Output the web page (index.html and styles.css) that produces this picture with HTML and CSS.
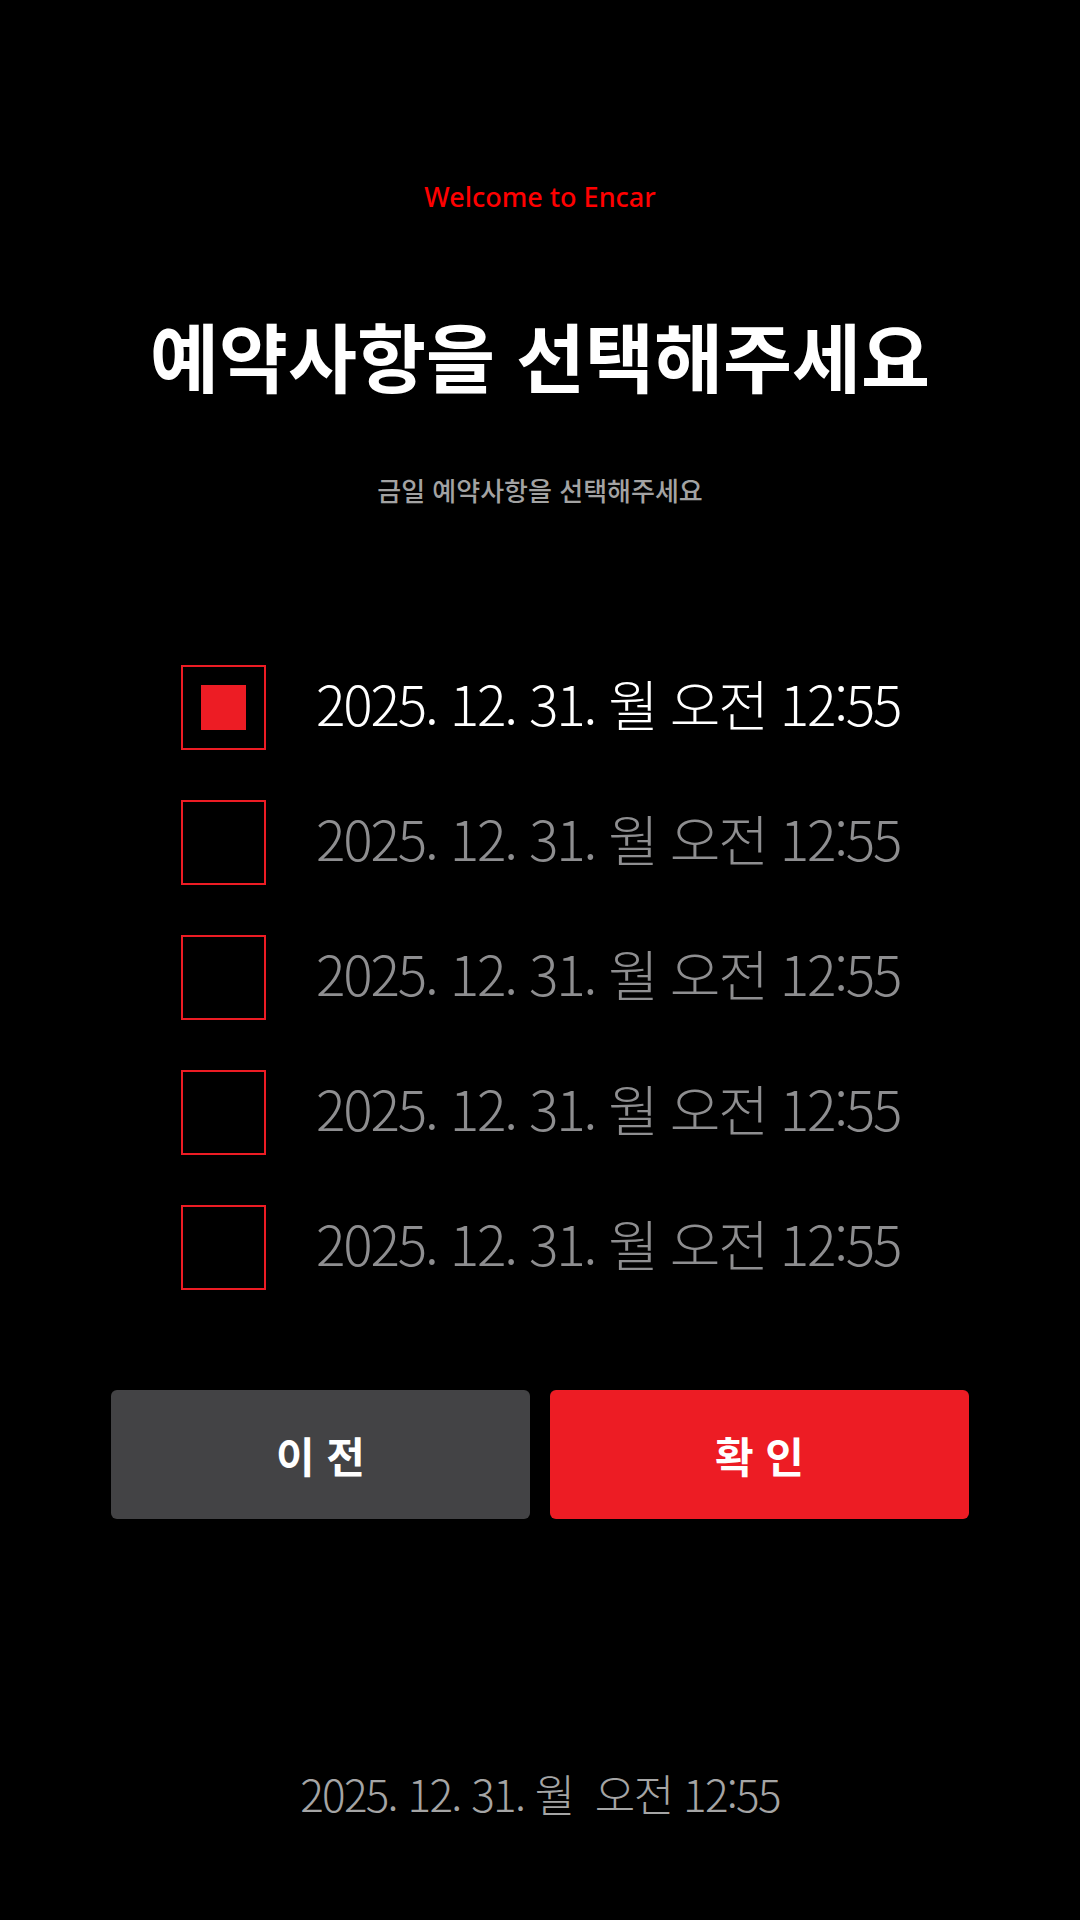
FILE: index.html
```html
<!DOCTYPE html>
<html lang="ko">
<head>
<meta charset="utf-8">
<title>Encar</title>
<link rel="stylesheet" href="styles.css">
</head>
<body>
<main class="screen">
  <p class="welcome">Welcome to Encar</p>
  <h1 class="title">예약사항을 선택해주세요</h1>
  <p class="subtitle">금일 예약사항을 선택해주세요</p>

  <ul class="slots">
    <li class="slot is-selected"><span class="check"><span class="check-mark"></span></span><span class="slot-text">2025. 12. 31. 월 오전 12:55</span></li>
    <li class="slot"><span class="check"></span><span class="slot-text">2025. 12. 31. 월 오전 12:55</span></li>
    <li class="slot"><span class="check"></span><span class="slot-text">2025. 12. 31. 월 오전 12:55</span></li>
    <li class="slot"><span class="check"></span><span class="slot-text">2025. 12. 31. 월 오전 12:55</span></li>
    <li class="slot"><span class="check"></span><span class="slot-text">2025. 12. 31. 월 오전 12:55</span></li>
  </ul>

  <div class="actions">
    <button class="btn btn-prev" type="button">이 전</button>
    <button class="btn btn-ok" type="button">확 인</button>
  </div>

  <p class="clock">2025. 12. 31. 월&nbsp;&nbsp;오전 12:55</p>
</main>
</body>
</html>
```
FILE: styles.css
```css
html, body {
  margin: 0;
  padding: 0;
  background: #000;
}

body {
  font-family: "Noto Sans CJK KR", "Noto Sans", sans-serif;
  color: #fff;
}

.screen {
  min-height: 1920px;
  display: flex;
  flex-direction: column;
  align-items: stretch;
  box-sizing: border-box;
  padding-top: 177px;
  padding-bottom: 102px;
}

.welcome {
  margin: 0;
  text-align: center;
  font-family: "Noto Sans", "Noto Sans CJK KR", sans-serif;
  font-weight: 500;
  font-size: 27px;
  line-height: 40px;
  color: #ff0000;
}

.title {
  margin: 93px 0 0;
  text-align: center;
  font-size: 75px;
  font-weight: 700;
  line-height: 90px;
  color: #fff;
}

.subtitle {
  margin: 74px 0 0;
  text-align: center;
  font-size: 26px;
  font-weight: 500;
  line-height: 32px;
  color: #a3a3a3;
}

.slots {
  list-style: none;
  margin: 159px 0 0;
  padding: 0 0 0 181px;
  display: flex;
  flex-direction: column;
  gap: 50px;
}

.slot {
  display: flex;
  align-items: center;
  gap: 50px;
  height: 85px;
}

.check {
  width: 85px;
  height: 85px;
  box-sizing: border-box;
  border: 2px solid #ed1c24;
  display: flex;
  align-items: center;
  justify-content: center;
  flex: none;
}

.check-mark {
  width: 45px;
  height: 45px;
  background: #ed1c24;
}

.slot-text {
  font-size: 55px;
  font-weight: 300;
  letter-spacing: -2.2px;
  line-height: 75px;
  padding-bottom: 10px;
  color: #8e8e90;
  white-space: nowrap;
}

.is-selected .slot-text {
  color: #fff;
}

.actions {
  margin-top: 100px;
  padding: 0 111px;
  display: flex;
  gap: 20px;
}

.btn {
  flex: 1;
  height: 129px;
  border: 0;
  border-radius: 6px;
  font-family: "Noto Sans CJK KR", sans-serif;
  font-size: 42px;
  font-weight: 700;
  color: #fff;
  padding: 0;
}

.btn-prev {
  background: #434345;
}

.btn-ok {
  background: #ed1c24;
}

.clock {
  margin: auto 0 0;
  text-align: center;
  font-size: 44px;
  font-weight: 300;
  letter-spacing: -1.7px;
  line-height: 50px;
  color: #a5a5a5;
}
```
